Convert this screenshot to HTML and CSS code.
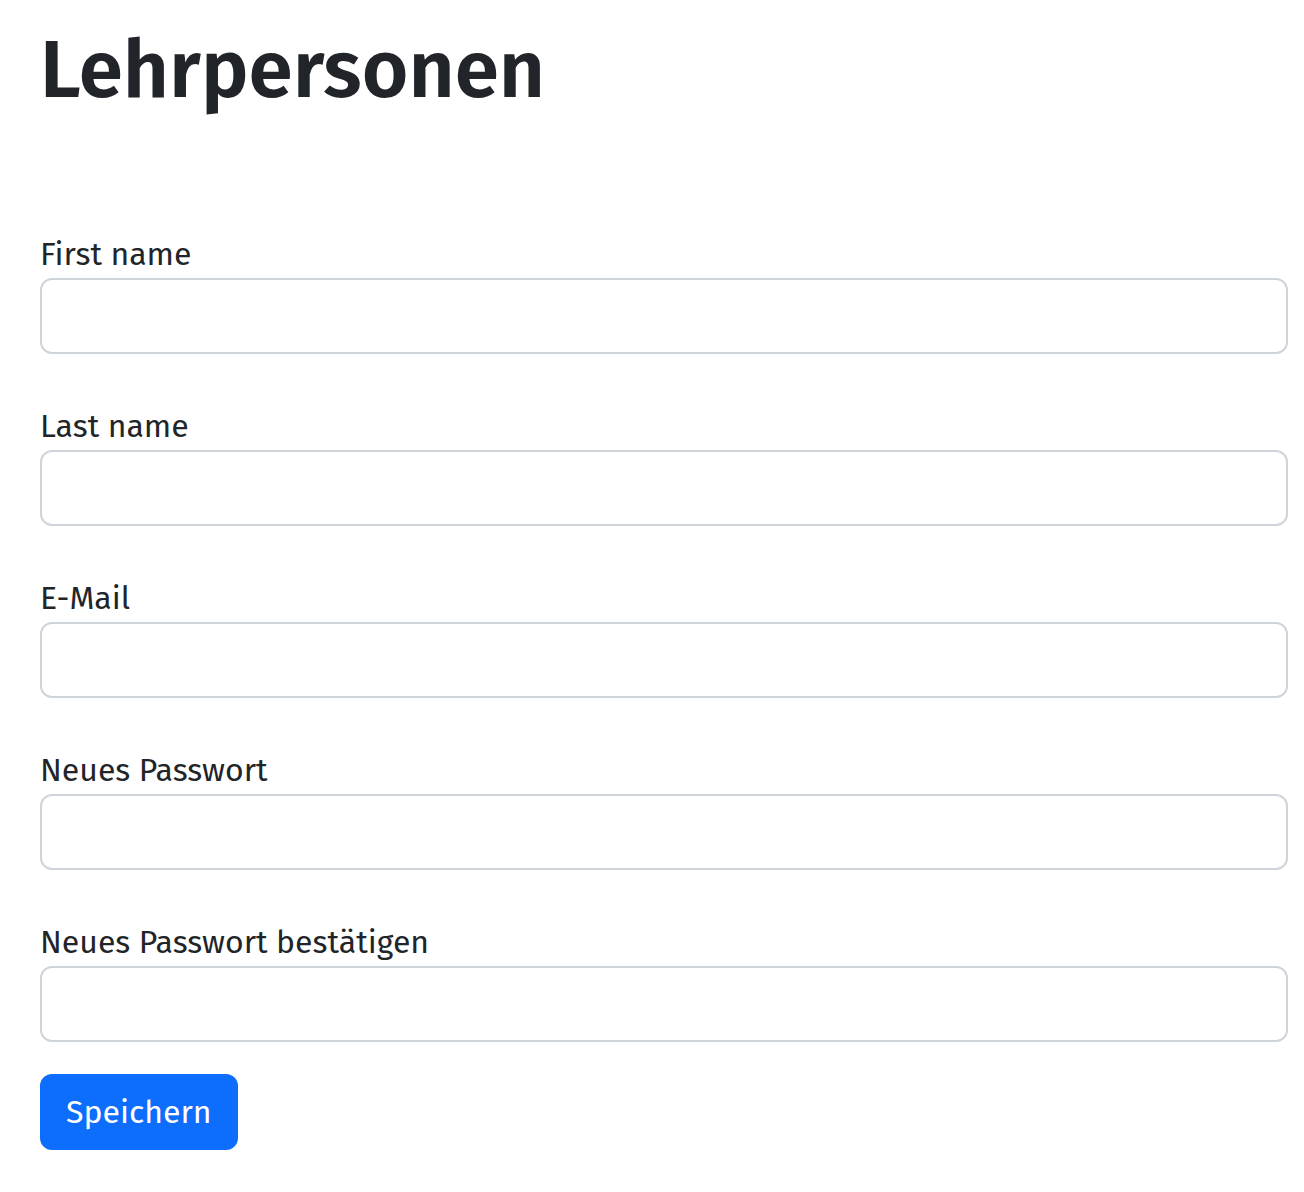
FILE: index.html
```html
<!DOCTYPE html>
<html lang="de">
<head>
<meta charset="utf-8">
<title>Lehrpersonen</title>
<link rel="stylesheet" href="styles.css">
</head>
<body>
<main class="page">
  <h1 class="title">Lehrpersonen</h1>
  <form class="form">
    <div class="field">
      <label class="label" for="first">First name</label>
      <input class="control" id="first" type="text">
    </div>
    <div class="field">
      <label class="label" for="last">Last name</label>
      <input class="control" id="last" type="text">
    </div>
    <div class="field">
      <label class="label" for="email">E-Mail</label>
      <input class="control" id="email" type="email">
    </div>
    <div class="field">
      <label class="label" for="pw">Neues Passwort</label>
      <input class="control" id="pw" type="password">
    </div>
    <div class="field">
      <label class="label" for="pw2">Neues Passwort bestätigen</label>
      <input class="control" id="pw2" type="password">
    </div>
    <button class="btn" type="submit">Speichern</button>
  </form>
</main>
</body>
</html>
```
FILE: styles.css
```css
* { box-sizing: border-box; }
html, body { margin: 0; padding: 0; background: #fff; }
body {
  font-family: "Fira Sans", "Open Sans", "Noto Sans", sans-serif;
  color: #212529;
  font-size: 32px;
  line-height: 1.5;
}
.page {
  padding: 22px 16px 0 40px;
}
.title {
  margin: 0;
  font-size: 80px;
  font-weight: 600;
  line-height: 96px;
}
.form {
  margin-top: 96px;
}
.field {
  margin-bottom: 32px;
}
.label {
  display: block;
  padding-top: 16px;
  margin: 0;
  line-height: 48px;
}
.control {
  display: block;
  width: 100%;
  height: 76px;
  border: 2px solid #ced4da;
  border-radius: 12px;
  padding: 12px 24px;
  font: inherit;
  background: #fff;
}
.btn {
  display: inline-block;
  height: 76px;
  padding: 12px 24px;
  border: 2px solid #0d6efd;
  border-radius: 12px;
  background: #0d6efd;
  color: #fff;
  font: inherit;
  line-height: 48px;
}
```
